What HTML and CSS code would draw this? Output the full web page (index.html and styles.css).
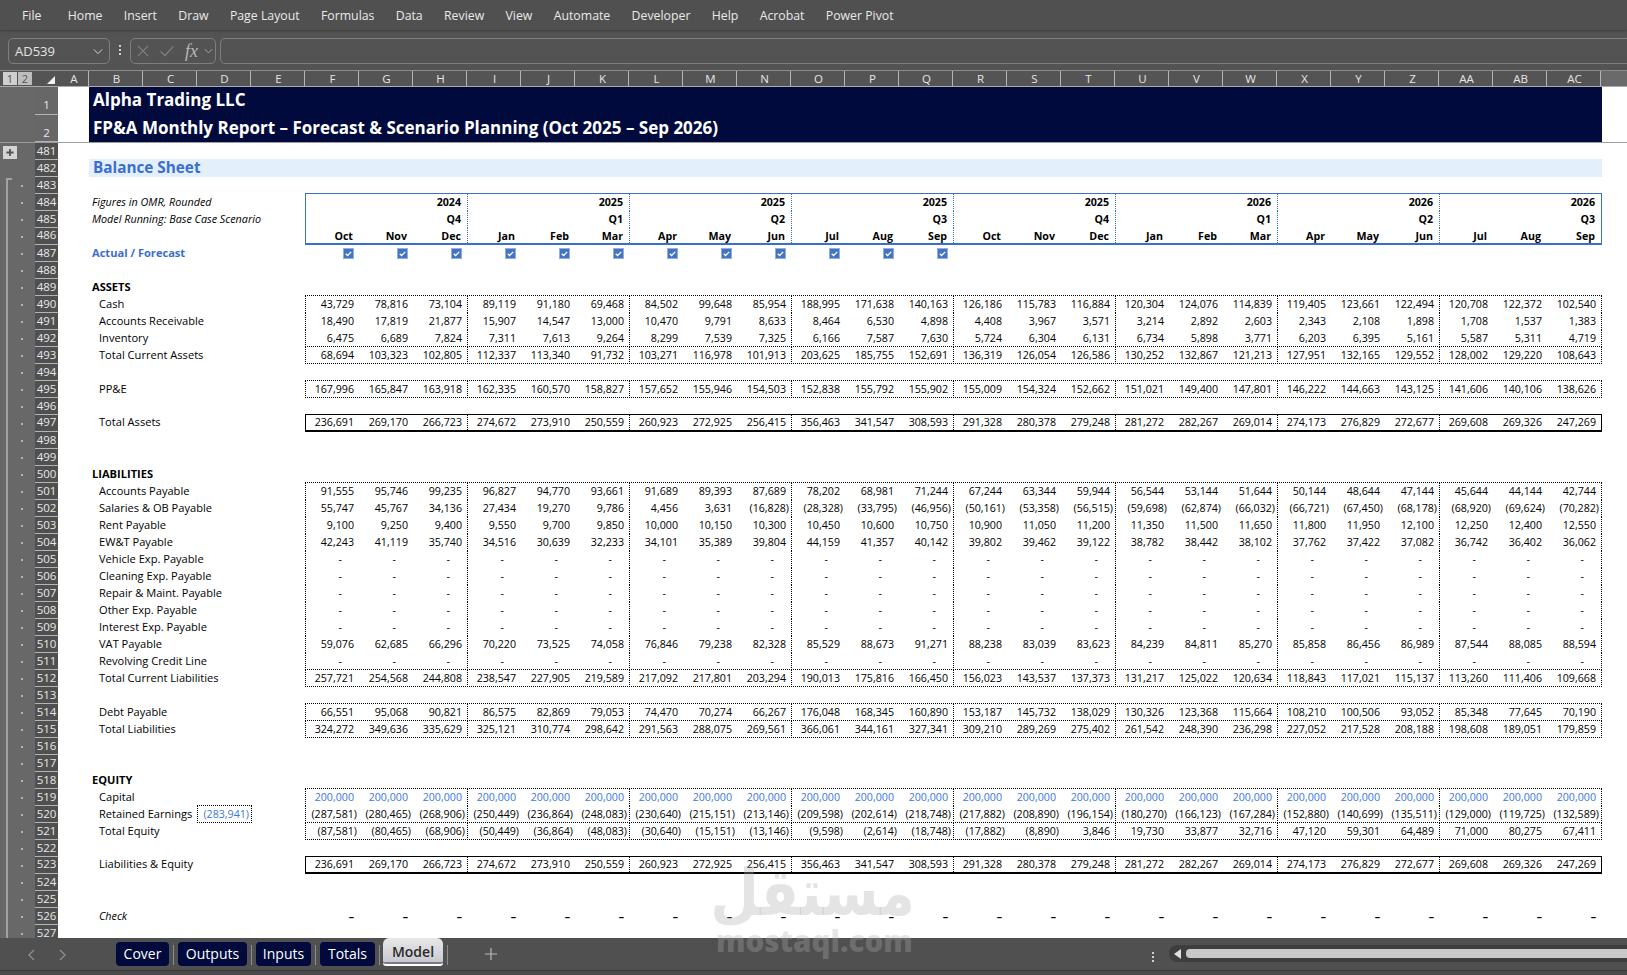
FILE: index.html
```html
<!DOCTYPE html>
<html lang="en">
<head>
<meta charset="utf-8">
<title>Model - Alpha Trading LLC</title>
<link rel="stylesheet" href="styles.css">
</head>
<body>
<svg class="defs" aria-hidden="true"><symbol id="chk" viewBox="0 0 12 12"><rect x="0.5" y="0.5" width="11" height="11" fill="#4472c4" stroke="#8fb0e6"/><path d="M3 6.3l2 1.9 4-4" fill="none" stroke="#fff" stroke-width="1.4"/></symbol></svg>
<nav class="menu"><span>File</span><span>Home</span><span>Insert</span><span>Draw</span><span>Page Layout</span><span>Formulas</span><span>Data</span><span>Review</span><span>View</span><span>Automate</span><span>Developer</span><span>Help</span><span>Acrobat</span><span>Power Pivot</span></nav>
<div class="fbar">
  <div class="namebox"><span>AD539</span><svg class="chev" viewBox="0 0 12 8"><path d="M1 1.5l5 5 5-5" fill="none" stroke="#d0d0d0" stroke-width="1.2"/></svg></div>
  <div class="vdots"><i></i><i></i><i></i></div>
  <div class="fnbox">
    <svg class="fnx" viewBox="0 0 14 14"><path d="M1 1l12 12M13 1L1 13" fill="none" stroke="#858585" stroke-width="1.2"/></svg>
    <svg class="fnc" viewBox="0 0 18 14"><path d="M1.5 7.5l5 5 10-11" fill="none" stroke="#858585" stroke-width="1.2"/></svg>
    <span class="fx">fx</span>
    <svg class="chev2" viewBox="0 0 12 8"><path d="M1 1.5l5 5 5-5" fill="none" stroke="#b0b0b0" stroke-width="1.1"/></svg>
  </div>
  <div class="finput"></div>
</div>
<div class="colhead">
  <div class="lv"><span class="lvb">1</span><span class="lvb alt">2</span></div>
  <div class="corner"><svg viewBox="0 0 8 8"><path d="M8 0v8H0z" fill="#f2f2f2"/></svg></div>
  <span class="ch cha">A</span><span class="ch">B</span><span class="ch">C</span><span class="ch">D</span><span class="ch">E</span><span class="ch">F</span><span class="ch">G</span><span class="ch">H</span><span class="ch">I</span><span class="ch">J</span><span class="ch">K</span><span class="ch">L</span><span class="ch">M</span><span class="ch">N</span><span class="ch">O</span><span class="ch">P</span><span class="ch">Q</span><span class="ch">R</span><span class="ch">S</span><span class="ch">T</span><span class="ch">U</span><span class="ch">V</span><span class="ch">W</span><span class="ch">X</span><span class="ch">Y</span><span class="ch">Z</span><span class="ch">AA</span><span class="ch">AB</span><span class="ch">AC</span>
  <div class="chrest"></div>
</div>
<div class="frozen">
  <div class="frow"><div class="ol plain"></div><div class="rh big">1</div><div class="cola"></div><div class="title">Alpha Trading LLC</div></div>
  <div class="frow"><div class="ol plain"></div><div class="rh big">2</div><div class="cola"></div><div class="title">FP&amp;A Monthly Report – Forecast &amp; Scenario Planning (Oct 2025 – Sep 2026)</div></div>
</div>
<main class="sheet">
<div class="row"><div class="ol plain"><span class="plus"><svg viewBox="0 0 10 10"><path d="M5 1v8M1 5h8" stroke="#555" stroke-width="2"/></svg></span></div><div class="rh">481</div></div>
<div class="row"><div class="ol plain"></div><div class="rh">482</div><div class="band">Balance Sheet</div></div>
<div class="row"><div class="ol on first"></div><div class="rh">483</div></div>
<div class="row"><div class="ol on"></div><div class="rh">484</div><div class="lbl it">Figures in OMR, Rounded</div>
<div class="cells hd hd-t"><span></span><span></span><span>2024</span><span></span><span></span><span>2025</span><span></span><span></span><span>2025</span><span></span><span></span><span>2025</span><span></span><span></span><span>2025</span><span></span><span></span><span>2026</span><span></span><span></span><span>2026</span><span></span><span></span><span>2026</span></div></div>
<div class="row"><div class="ol on"></div><div class="rh">485</div><div class="lbl it">Model Running: Base Case Scenario</div>
<div class="cells hd"><span></span><span></span><span>Q4</span><span></span><span></span><span>Q1</span><span></span><span></span><span>Q2</span><span></span><span></span><span>Q3</span><span></span><span></span><span>Q4</span><span></span><span></span><span>Q1</span><span></span><span></span><span>Q2</span><span></span><span></span><span>Q3</span></div></div>
<div class="row up"><div class="ol on"></div><div class="rh">486</div><div class="lbl"></div>
<div class="cells hd hd-b"><span>Oct</span><span>Nov</span><span>Dec</span><span>Jan</span><span>Feb</span><span>Mar</span><span>Apr</span><span>May</span><span>Jun</span><span>Jul</span><span>Aug</span><span>Sep</span><span>Oct</span><span>Nov</span><span>Dec</span><span>Jan</span><span>Feb</span><span>Mar</span><span>Apr</span><span>May</span><span>Jun</span><span>Jul</span><span>Aug</span><span>Sep</span></div></div>
<div class="row"><div class="ol on"></div><div class="rh">487</div><div class="lbl bold blue">Actual / Forecast</div>
<div class="checks"><span><svg class="cb"><use href="#chk"/></svg></span><span><svg class="cb"><use href="#chk"/></svg></span><span><svg class="cb"><use href="#chk"/></svg></span><span><svg class="cb"><use href="#chk"/></svg></span><span><svg class="cb"><use href="#chk"/></svg></span><span><svg class="cb"><use href="#chk"/></svg></span><span><svg class="cb"><use href="#chk"/></svg></span><span><svg class="cb"><use href="#chk"/></svg></span><span><svg class="cb"><use href="#chk"/></svg></span><span><svg class="cb"><use href="#chk"/></svg></span><span><svg class="cb"><use href="#chk"/></svg></span><span><svg class="cb"><use href="#chk"/></svg></span></div></div>
<div class="row"><div class="ol on"></div><div class="rh">488</div></div>
<div class="row"><div class="ol on"></div><div class="rh">489</div><div class="lbl bold">ASSETS</div></div>
<div class="row"><div class="ol on"></div><div class="rh">490</div><div class="lbl in">Cash</div>
<div class="cells t"><span>43,729</span><span>78,816</span><span>73,104</span><span>89,119</span><span>91,180</span><span>69,468</span><span>84,502</span><span>99,648</span><span>85,954</span><span>188,995</span><span>171,638</span><span>140,163</span><span>126,186</span><span>115,783</span><span>116,884</span><span>120,304</span><span>124,076</span><span>114,839</span><span>119,405</span><span>123,661</span><span>122,494</span><span>120,708</span><span>122,372</span><span>102,540</span></div></div>
<div class="row"><div class="ol on"></div><div class="rh">491</div><div class="lbl in">Accounts Receivable</div>
<div class="cells"><span>18,490</span><span>17,819</span><span>21,877</span><span>15,907</span><span>14,547</span><span>13,000</span><span>10,470</span><span>9,791</span><span>8,633</span><span>8,464</span><span>6,530</span><span>4,898</span><span>4,408</span><span>3,967</span><span>3,571</span><span>3,214</span><span>2,892</span><span>2,603</span><span>2,343</span><span>2,108</span><span>1,898</span><span>1,708</span><span>1,537</span><span>1,383</span></div></div>
<div class="row"><div class="ol on"></div><div class="rh">492</div><div class="lbl in">Inventory</div>
<div class="cells"><span>6,475</span><span>6,689</span><span>7,824</span><span>7,311</span><span>7,613</span><span>9,264</span><span>8,299</span><span>7,539</span><span>7,325</span><span>6,166</span><span>7,587</span><span>7,630</span><span>5,724</span><span>6,304</span><span>6,131</span><span>6,734</span><span>5,898</span><span>3,771</span><span>6,203</span><span>6,395</span><span>5,161</span><span>5,587</span><span>5,311</span><span>4,719</span></div></div>
<div class="row"><div class="ol on"></div><div class="rh">493</div><div class="lbl in">Total Current Assets</div>
<div class="cells t b"><span>68,694</span><span>103,323</span><span>102,805</span><span>112,337</span><span>113,340</span><span>91,732</span><span>103,271</span><span>116,978</span><span>101,913</span><span>203,625</span><span>185,755</span><span>152,691</span><span>136,319</span><span>126,054</span><span>126,586</span><span>130,252</span><span>132,867</span><span>121,213</span><span>127,951</span><span>132,165</span><span>129,552</span><span>128,002</span><span>129,220</span><span>108,643</span></div></div>
<div class="row"><div class="ol on"></div><div class="rh">494</div></div>
<div class="row"><div class="ol on"></div><div class="rh">495</div><div class="lbl in">PP&amp;E</div>
<div class="cells t b"><span>167,996</span><span>165,847</span><span>163,918</span><span>162,335</span><span>160,570</span><span>158,827</span><span>157,652</span><span>155,946</span><span>154,503</span><span>152,838</span><span>155,792</span><span>155,902</span><span>155,009</span><span>154,324</span><span>152,662</span><span>151,021</span><span>149,400</span><span>147,801</span><span>146,222</span><span>144,663</span><span>143,125</span><span>141,606</span><span>140,106</span><span>138,626</span></div></div>
<div class="row"><div class="ol on"></div><div class="rh">496</div></div>
<div class="row up"><div class="ol on"></div><div class="rh">497</div><div class="lbl in">Total Assets</div>
<div class="cells st"><span>236,691</span><span>269,170</span><span>266,723</span><span>274,672</span><span>273,910</span><span>250,559</span><span>260,923</span><span>272,925</span><span>256,415</span><span>356,463</span><span>341,547</span><span>308,593</span><span>291,328</span><span>280,378</span><span>279,248</span><span>281,272</span><span>282,267</span><span>269,014</span><span>274,173</span><span>276,829</span><span>272,677</span><span>269,608</span><span>269,326</span><span>247,269</span></div></div>
<div class="row"><div class="ol on"></div><div class="rh">498</div></div>
<div class="row"><div class="ol on"></div><div class="rh">499</div></div>
<div class="row"><div class="ol on"></div><div class="rh">500</div><div class="lbl bold">LIABILITIES</div></div>
<div class="row"><div class="ol on"></div><div class="rh">501</div><div class="lbl in">Accounts Payable</div>
<div class="cells t"><span>91,555</span><span>95,746</span><span>99,235</span><span>96,827</span><span>94,770</span><span>93,661</span><span>91,689</span><span>89,393</span><span>87,689</span><span>78,202</span><span>68,981</span><span>71,244</span><span>67,244</span><span>63,344</span><span>59,944</span><span>56,544</span><span>53,144</span><span>51,644</span><span>50,144</span><span>48,644</span><span>47,144</span><span>45,644</span><span>44,144</span><span>42,744</span></div></div>
<div class="row"><div class="ol on"></div><div class="rh">502</div><div class="lbl in">Salaries &amp; OB Payable</div>
<div class="cells"><span>55,747</span><span>45,767</span><span>34,136</span><span>27,434</span><span>19,270</span><span>9,786</span><span>4,456</span><span>3,631</span><span class="n">(16,828)</span><span class="n">(28,328)</span><span class="n">(33,795)</span><span class="n">(46,956)</span><span class="n">(50,161)</span><span class="n">(53,358)</span><span class="n">(56,515)</span><span class="n">(59,698)</span><span class="n">(62,874)</span><span class="n">(66,032)</span><span class="n">(66,721)</span><span class="n">(67,450)</span><span class="n">(68,178)</span><span class="n">(68,920)</span><span class="n">(69,624)</span><span class="n">(70,282)</span></div></div>
<div class="row"><div class="ol on"></div><div class="rh">503</div><div class="lbl in">Rent Payable</div>
<div class="cells"><span>9,100</span><span>9,250</span><span>9,400</span><span>9,550</span><span>9,700</span><span>9,850</span><span>10,000</span><span>10,150</span><span>10,300</span><span>10,450</span><span>10,600</span><span>10,750</span><span>10,900</span><span>11,050</span><span>11,200</span><span>11,350</span><span>11,500</span><span>11,650</span><span>11,800</span><span>11,950</span><span>12,100</span><span>12,250</span><span>12,400</span><span>12,550</span></div></div>
<div class="row"><div class="ol on"></div><div class="rh">504</div><div class="lbl in">EW&amp;T Payable</div>
<div class="cells"><span>42,243</span><span>41,119</span><span>35,740</span><span>34,516</span><span>30,639</span><span>32,233</span><span>34,101</span><span>35,389</span><span>39,804</span><span>44,159</span><span>41,357</span><span>40,142</span><span>39,802</span><span>39,462</span><span>39,122</span><span>38,782</span><span>38,442</span><span>38,102</span><span>37,762</span><span>37,422</span><span>37,082</span><span>36,742</span><span>36,402</span><span>36,062</span></div></div>
<div class="row"><div class="ol on"></div><div class="rh">505</div><div class="lbl in">Vehicle Exp. Payable</div>
<div class="cells dash"><span>-</span><span>-</span><span>-</span><span>-</span><span>-</span><span>-</span><span>-</span><span>-</span><span>-</span><span>-</span><span>-</span><span>-</span><span>-</span><span>-</span><span>-</span><span>-</span><span>-</span><span>-</span><span>-</span><span>-</span><span>-</span><span>-</span><span>-</span><span>-</span></div></div>
<div class="row"><div class="ol on"></div><div class="rh">506</div><div class="lbl in">Cleaning Exp. Payable</div>
<div class="cells dash"><span>-</span><span>-</span><span>-</span><span>-</span><span>-</span><span>-</span><span>-</span><span>-</span><span>-</span><span>-</span><span>-</span><span>-</span><span>-</span><span>-</span><span>-</span><span>-</span><span>-</span><span>-</span><span>-</span><span>-</span><span>-</span><span>-</span><span>-</span><span>-</span></div></div>
<div class="row"><div class="ol on"></div><div class="rh">507</div><div class="lbl in">Repair &amp; Maint. Payable</div>
<div class="cells dash"><span>-</span><span>-</span><span>-</span><span>-</span><span>-</span><span>-</span><span>-</span><span>-</span><span>-</span><span>-</span><span>-</span><span>-</span><span>-</span><span>-</span><span>-</span><span>-</span><span>-</span><span>-</span><span>-</span><span>-</span><span>-</span><span>-</span><span>-</span><span>-</span></div></div>
<div class="row"><div class="ol on"></div><div class="rh">508</div><div class="lbl in">Other Exp. Payable</div>
<div class="cells dash"><span>-</span><span>-</span><span>-</span><span>-</span><span>-</span><span>-</span><span>-</span><span>-</span><span>-</span><span>-</span><span>-</span><span>-</span><span>-</span><span>-</span><span>-</span><span>-</span><span>-</span><span>-</span><span>-</span><span>-</span><span>-</span><span>-</span><span>-</span><span>-</span></div></div>
<div class="row"><div class="ol on"></div><div class="rh">509</div><div class="lbl in">Interest Exp. Payable</div>
<div class="cells dash"><span>-</span><span>-</span><span>-</span><span>-</span><span>-</span><span>-</span><span>-</span><span>-</span><span>-</span><span>-</span><span>-</span><span>-</span><span>-</span><span>-</span><span>-</span><span>-</span><span>-</span><span>-</span><span>-</span><span>-</span><span>-</span><span>-</span><span>-</span><span>-</span></div></div>
<div class="row"><div class="ol on"></div><div class="rh">510</div><div class="lbl in">VAT Payable</div>
<div class="cells"><span>59,076</span><span>62,685</span><span>66,296</span><span>70,220</span><span>73,525</span><span>74,058</span><span>76,846</span><span>79,238</span><span>82,328</span><span>85,529</span><span>88,673</span><span>91,271</span><span>88,238</span><span>83,039</span><span>83,623</span><span>84,239</span><span>84,811</span><span>85,270</span><span>85,858</span><span>86,456</span><span>86,989</span><span>87,544</span><span>88,085</span><span>88,594</span></div></div>
<div class="row"><div class="ol on"></div><div class="rh">511</div><div class="lbl in">Revolving Credit Line</div>
<div class="cells dash"><span>-</span><span>-</span><span>-</span><span>-</span><span>-</span><span>-</span><span>-</span><span>-</span><span>-</span><span>-</span><span>-</span><span>-</span><span>-</span><span>-</span><span>-</span><span>-</span><span>-</span><span>-</span><span>-</span><span>-</span><span>-</span><span>-</span><span>-</span><span>-</span></div></div>
<div class="row"><div class="ol on"></div><div class="rh">512</div><div class="lbl in">Total Current Liabilities</div>
<div class="cells t b"><span>257,721</span><span>254,568</span><span>244,808</span><span>238,547</span><span>227,905</span><span>219,589</span><span>217,092</span><span>217,801</span><span>203,294</span><span>190,013</span><span>175,816</span><span>166,450</span><span>156,023</span><span>143,537</span><span>137,373</span><span>131,217</span><span>125,022</span><span>120,634</span><span>118,843</span><span>117,021</span><span>115,137</span><span>113,260</span><span>111,406</span><span>109,668</span></div></div>
<div class="row"><div class="ol on"></div><div class="rh">513</div></div>
<div class="row"><div class="ol on"></div><div class="rh">514</div><div class="lbl in">Debt Payable</div>
<div class="cells t b"><span>66,551</span><span>95,068</span><span>90,821</span><span>86,575</span><span>82,869</span><span>79,053</span><span>74,470</span><span>70,274</span><span>66,267</span><span>176,048</span><span>168,345</span><span>160,890</span><span>153,187</span><span>145,732</span><span>138,029</span><span>130,326</span><span>123,368</span><span>115,664</span><span>108,210</span><span>100,506</span><span>93,052</span><span>85,348</span><span>77,645</span><span>70,190</span></div></div>
<div class="row"><div class="ol on"></div><div class="rh">515</div><div class="lbl in">Total Liabilities</div>
<div class="cells b"><span>324,272</span><span>349,636</span><span>335,629</span><span>325,121</span><span>310,774</span><span>298,642</span><span>291,563</span><span>288,075</span><span>269,561</span><span>366,061</span><span>344,161</span><span>327,341</span><span>309,210</span><span>289,269</span><span>275,402</span><span>261,542</span><span>248,390</span><span>236,298</span><span>227,052</span><span>217,528</span><span>208,188</span><span>198,608</span><span>189,051</span><span>179,859</span></div></div>
<div class="row"><div class="ol on"></div><div class="rh">516</div></div>
<div class="row"><div class="ol on"></div><div class="rh">517</div></div>
<div class="row"><div class="ol on"></div><div class="rh">518</div><div class="lbl bold">EQUITY</div></div>
<div class="row"><div class="ol on"></div><div class="rh">519</div><div class="lbl in">Capital</div>
<div class="cells t inputs"><span>200,000</span><span>200,000</span><span>200,000</span><span>200,000</span><span>200,000</span><span>200,000</span><span>200,000</span><span>200,000</span><span>200,000</span><span>200,000</span><span>200,000</span><span>200,000</span><span>200,000</span><span>200,000</span><span>200,000</span><span>200,000</span><span>200,000</span><span>200,000</span><span>200,000</span><span>200,000</span><span>200,000</span><span>200,000</span><span>200,000</span><span>200,000</span></div></div>
<div class="row"><div class="ol on"></div><div class="rh">520</div><div class="lbl in withbox"><span class="retxt">Retained Earnings</span><span class="rebox">(283,941)</span></div>
<div class="cells"><span class="n">(287,581)</span><span class="n">(280,465)</span><span class="n">(268,906)</span><span class="n">(250,449)</span><span class="n">(236,864)</span><span class="n">(248,083)</span><span class="n">(230,640)</span><span class="n">(215,151)</span><span class="n">(213,146)</span><span class="n">(209,598)</span><span class="n">(202,614)</span><span class="n">(218,748)</span><span class="n">(217,882)</span><span class="n">(208,890)</span><span class="n">(196,154)</span><span class="n">(180,270)</span><span class="n">(166,123)</span><span class="n">(167,284)</span><span class="n">(152,880)</span><span class="n">(140,699)</span><span class="n">(135,511)</span><span class="n">(129,000)</span><span class="n">(119,725)</span><span class="n">(132,589)</span></div></div>
<div class="row"><div class="ol on"></div><div class="rh">521</div><div class="lbl in">Total Equity</div>
<div class="cells t b"><span class="n">(87,581)</span><span class="n">(80,465)</span><span class="n">(68,906)</span><span class="n">(50,449)</span><span class="n">(36,864)</span><span class="n">(48,083)</span><span class="n">(30,640)</span><span class="n">(15,151)</span><span class="n">(13,146)</span><span class="n">(9,598)</span><span class="n">(2,614)</span><span class="n">(18,748)</span><span class="n">(17,882)</span><span class="n">(8,890)</span><span>3,846</span><span>19,730</span><span>33,877</span><span>32,716</span><span>47,120</span><span>59,301</span><span>64,489</span><span>71,000</span><span>80,275</span><span>67,411</span></div></div>
<div class="row"><div class="ol on"></div><div class="rh">522</div></div>
<div class="row up"><div class="ol on"></div><div class="rh">523</div><div class="lbl in">Liabilities &amp; Equity</div>
<div class="cells st"><span>236,691</span><span>269,170</span><span>266,723</span><span>274,672</span><span>273,910</span><span>250,559</span><span>260,923</span><span>272,925</span><span>256,415</span><span>356,463</span><span>341,547</span><span>308,593</span><span>291,328</span><span>280,378</span><span>279,248</span><span>281,272</span><span>282,267</span><span>269,014</span><span>274,173</span><span>276,829</span><span>272,677</span><span>269,608</span><span>269,326</span><span>247,269</span></div></div>
<div class="row"><div class="ol on"></div><div class="rh">524</div></div>
<div class="row"><div class="ol on"></div><div class="rh">525</div></div>
<div class="row"><div class="ol on"></div><div class="rh">526</div><div class="lbl in it">Check</div>
<div class="cells check"><span>–</span><span>–</span><span>–</span><span>–</span><span>–</span><span>–</span><span>–</span><span>–</span><span>–</span><span>–</span><span>–</span><span>–</span><span>–</span><span>–</span><span>–</span><span>–</span><span>–</span><span>–</span><span>–</span><span>–</span><span>–</span><span>–</span><span>–</span><span>–</span></div></div>
<div class="row"><div class="ol on"></div><div class="rh">527</div></div>
</main>
<footer class="tabbar">
  <svg class="nav first" viewBox="0 0 8 12"><path d="M7 1L2 6l5 5" fill="none" stroke="#8f8f8f" stroke-width="1.3"/></svg>
  <svg class="nav" viewBox="0 0 8 12"><path d="M1 1l5 5-5 5" fill="none" stroke="#8f8f8f" stroke-width="1.3"/></svg>
  <div class="tabs">
    <span class="tab cover">Cover</span><i class="sep"></i>
    <span class="tab outputs">Outputs</span><i class="sep"></i>
    <span class="tab inputs-t">Inputs</span><i class="sep"></i>
    <span class="tab totals">Totals</span><i class="sep"></i>
    <span class="tab active">Model</span><i class="sep"></i>
  </div>
  <svg class="addtab" viewBox="0 0 12 12"><path d="M6 0v12M0 6h12" stroke="#b8b8b8" stroke-width="1.2"/></svg>
  <div class="vdots small"><i></i><i></i><i></i></div>
  <div class="scroll"><svg class="sarrow" viewBox="0 0 7 10"><path d="M7 0v10L0 5z" fill="#e0e0e0"/></svg><div class="thumb"></div></div>
</footer>
<div class="status"></div>
<div class="wm"><div class="wm-ar" lang="ar" dir="rtl">مستقل</div><div class="wm-en">mostaql.com</div></div>
</body>
</html>
```
FILE: styles.css
```css
*{box-sizing:border-box}
html,body{margin:0;padding:0}
body{position:relative;width:1627px;height:975px;overflow:hidden;display:flex;flex-direction:column;background:#535353;font-family:"Open Sans","Noto Sans",sans-serif;font-size:10.67px;color:#000}
.defs{width:0;height:0;position:absolute}
i{display:block;font-style:normal}

.menu{height:30px;flex:none;display:flex;align-items:center;gap:21.3px;padding:0 0 0 22px;background:#505050;color:#e9e9e9;font-size:12.3px;box-shadow:0 1px 2px #3c3c3c;position:relative}
.menu span:first-child{margin-right:5px}

.fbar{height:41px;flex:none;display:flex;align-items:flex-start;padding-top:8px;background:#535353;border-bottom:1px solid #8a8a8a}
.namebox{width:102px;height:26px;margin-left:8px;border:1px solid #7e7e7e;border-radius:5px;display:flex;align-items:center;justify-content:space-between;padding:0 6px 0 6px;color:#e4e4e4;font-size:13px}
.chev{width:10px;height:7px}
.vdots{display:flex;flex-direction:column;gap:2px;width:20px;align-items:center;padding-top:7px}
.vdots i{width:2px;height:2px;background:#d0d0d0}
.fnbox{width:86px;height:26px;border:1px solid #7e7e7e;border-radius:5px;display:flex;align-items:center;flex:none;padding-right:2px}
.fnx{width:12px;height:12px;margin-left:6px;flex:none}
.fnc{width:16px;height:12px;margin-left:10px;flex:none}
.fx{font-family:"Liberation Serif",serif;font-style:italic;font-size:18px;line-height:20px;color:#b8b8b8;margin-left:10px}
.chev2{width:9px;height:6px;margin-left:auto;flex:none}
.finput{flex:1;height:26px;margin-left:4px;margin-right:-10px;border:1px solid #7e7e7e;border-radius:5px}

.colhead{height:16px;flex:none;display:flex;background:#545454;color:#e6e6e6;border-bottom:1px solid #ababab}
.lv{width:35px;flex:none;display:flex;gap:1px;padding:1px 0 0 3px}
.lvb{width:14px;height:13px;background:#cfcfcf;color:#555;font-size:11px;line-height:13px;text-align:center}
.lvb.alt{background:#bdbdbd}
.corner{width:23px;flex:none;display:flex;justify-content:flex-end;padding:5px 3px 0 0}
.corner svg{width:8px;height:8px}
.ch{width:54px;flex:none;text-align:center;font-size:11.5px;line-height:15px;border-right:1px solid #b5b5b5;padding-left:2px}
.cha{width:31px}
.chrest{flex:1;background:#6a6a6a}

.frozen{flex:none;height:56px;background:#fff}
.frow{display:flex;height:28px}
.frow .ol{height:100%}
.rh.big{height:100%;line-height:35px;background:#676767}
.cola{width:31px;flex:none}
.title{width:1513px;flex:none;background:#000a3d;color:#fff;font-weight:700;font-size:17px;line-height:26px;padding-left:4px;white-space:nowrap}
.frow:last-child{border-bottom:1px solid #9c9c9c}

.sheet{flex:1;min-height:0;overflow:hidden;background:#fff}
.row{display:flex;height:17px;align-items:flex-start}
.ol{width:35px;height:17px;flex:none;background-color:#686868}
.ol.on{background:linear-gradient(#a2a2a2,#a2a2a2) 6px 0/2px 100% no-repeat,linear-gradient(#b4b4b4,#b4b4b4) 21px 8px/2px 2px no-repeat,#686868}
.ol.first{background:linear-gradient(#a2a2a2,#a2a2a2) 6px 1px/6px 2px no-repeat,linear-gradient(#a2a2a2,#a2a2a2) 6px 1px/2px 100% no-repeat,linear-gradient(#b4b4b4,#b4b4b4) 21px 8px/2px 2px no-repeat,#686868}
.plus{display:block;width:14px;height:13px;margin-left:3px;padding:2px;position:relative;top:3px;background:#d4d4d4}
.plus svg{display:block;width:10px;height:9px}
.rh{width:23px;height:17px;flex:none;background:#505050;color:#e8e8e8;border-bottom:1px solid #b4b4b4;font-size:11.5px;line-height:16px;text-align:center}
.up .rh,.up .lbl{line-height:14px}

.lbl{width:247px;height:17px;flex:none;padding-left:34px;font-size:11.1px;line-height:16px;white-space:nowrap}
.lbl.in{padding-left:41px}
.lbl.it{font-size:10.8px}
.it{font-style:italic}
.bold{font-weight:700}
.blue{color:#3a6fcf}
.band{width:1513px;height:18px;flex:none;margin:-1px 0 0 31px;padding-left:4px;background:#e3effb;color:#3a6fcf;font-weight:700;font-size:15.3px;line-height:17px}
.withbox{display:flex}
.retxt{width:98px;flex:none}
.rebox{width:55px;height:18px;flex:none;margin-top:-1px;border:1px dotted #000;color:#3c78d8;font-size:10.67px;text-align:right;padding-right:2px;line-height:16px}

.cells{width:1297px;height:17px;flex:none;display:grid;grid-template-columns:repeat(24,54px);grid-auto-rows:17px;border-right:1px dotted #000;line-height:16px;text-align:right}
.cells span{display:block;height:17px;padding-right:5px;white-space:nowrap}
.cells span:nth-child(3n+1){border-left:1px dotted #000}
.cells .n{padding-right:2px}
.t{height:18px;margin-top:-1px;border-top:1px dotted #000}
.b{border-bottom:1px dotted #000}
.dash span{padding-right:17px}
.inputs{color:#3c78d8}
.st{height:18px;margin-top:-1px;border-top:1px solid #000;border-bottom:2px solid #000;border-right:1px solid #000;line-height:14px}
.st span:first-child{border-left:1px solid #000}
.check{border-right:0}
.check span,.check span:nth-child(3n+1){border-left:0;font-weight:700;line-height:19px}
.hd{border-right:1px solid #3a6fcf;font-weight:700}
.hd span{padding-right:6px}
.hd span:nth-child(3n+1){border-left:1px dotted #3a6fcf}
.hd span:first-child{border-left:1px solid #3a6fcf}
.hd-t{height:18px;margin-top:-1px;border-top:1px solid #3a6fcf}
.hd-b{border-bottom:2px solid #3a6fcf}
.checks{display:grid;grid-template-columns:repeat(12,54px);flex:none}
.checks span{display:flex;justify-content:flex-end;padding:3px 5px 0 0;height:17px}
.cb{width:11px;height:11px;display:block}

.tabbar{height:32px;flex:none;display:flex;align-items:flex-start;background:#505050;position:relative;z-index:1}
.nav{width:8px;height:12px;margin:11px 0 0 0;flex:none}
.nav.first{margin-left:27px}
.nav+.nav{margin-left:24px}
.tabs{display:flex;align-items:flex-start;margin-left:49px;width:336px;flex:none;color:#fff;font-size:14px}
.tab{display:block;height:24px;margin-top:4px;border-radius:4px;background:#000a3d;text-align:center;line-height:23px;flex:none}
.cover{width:53px}
.outputs{width:69px}
.inputs-t{width:55px}
.totals{width:55px}
.active{width:60px;height:28px;margin-top:0;padding-top:3px;margin-left:-1px;border-radius:6px 6px 3px 3px;border-bottom:2px solid #fff;background:linear-gradient(#e8e8e8,#c6c6cf);color:#2a2a2a;font-weight:600;line-height:21px;box-shadow:inset 0 -3px 0 -1px #7b7b86}
.sep{width:1px;height:20px;margin:7px 4px 0;background:#8c8c8c;flex:none}
.addtab{width:12px;height:12px;flex:none;margin:10px 0 0 33px}
.vdots.small{margin-left:644px;padding-top:14px;width:24px}
.scroll{flex:1;height:17px;margin:7px 0 0 4px;background:#3e3e3e;border-radius:8px 0 0 8px;display:flex;align-items:center;padding-left:5px}
.sarrow{width:7px;height:10px;flex:none}
.thumb{flex:1;height:9px;margin-left:5px;background:#c8c8c8;border-radius:4px 0 0 4px}
.status{height:5px;flex:none;background:#4a4a4a;border-top:1px solid #3a3a3a}

.wm{position:absolute;left:716px;top:858px;width:196px;z-index:2;color:rgba(174,174,174,.33);text-align:center;font-family:"DejaVu Sans",sans-serif;font-weight:700;white-space:nowrap}
.wm-ar{font-size:56px;line-height:70px;transform:translateX(3px) scaleY(1.15)}
.wm-en{font-size:29.5px;line-height:30px;font-weight:800;font-family:"Open Sans",sans-serif;margin-top:-2px}
```
